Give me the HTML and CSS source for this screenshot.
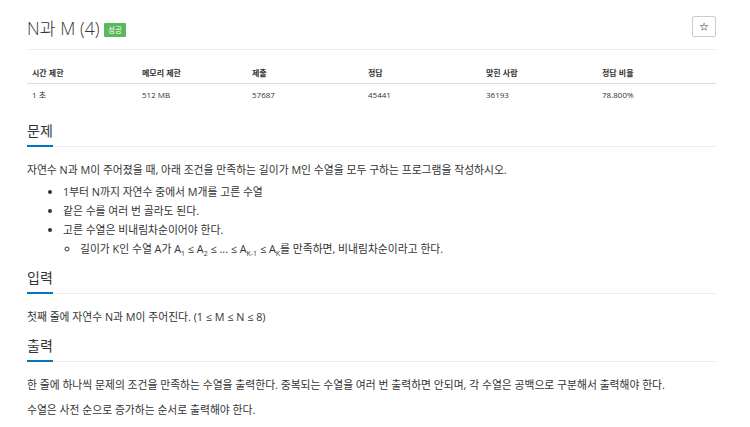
FILE: index.html
```html
<!DOCTYPE html>
<html lang="ko">
<head>
    <meta charset="UTF-8">
    <title>N과 M (4)</title>
    <link rel="stylesheet" href="styles.css">
</head>
<body>
<div class="page">
    <div class="page-header">
        <h1 class="title">N과 M (4) <span class="badge">성공</span></h1>
        <button class="star" type="button">&#9734;</button>
    </div>

    <table class="info">
        <thead>
        <tr>
            <th class="c1">시간 제한</th>
            <th class="c2">메모리 제한</th>
            <th class="c3">제출</th>
            <th class="c4">정답</th>
            <th class="c5">맞힌 사람</th>
            <th>정답 비율</th>
        </tr>
        </thead>
        <tbody>
        <tr>
            <td>1 초</td>
            <td>512 MB</td>
            <td>57687</td>
            <td>45441</td>
            <td>36193</td>
            <td>78.800%</td>
        </tr>
        </tbody>
    </table>

    <section class="problem first">
        <div class="headline"><h2>문제</h2></div>
        <p>자연수 N과 M이 주어졌을 때, 아래 조건을 만족하는 길이가 M인 수열을 모두 구하는 프로그램을 작성하시오.</p>
        <ul>
            <li>1부터 N까지 자연수 중에서 M개를 고른 수열</li>
            <li>같은 수를 여러 번 골라도 된다.</li>
            <li>고른 수열은 비내림차순이어야 한다.
                <ul>
                    <li>길이가 K인 수열 A가 A<sub>1</sub> ≤ A<sub>2</sub> ≤ ... ≤ A<sub>K-1</sub> ≤ A<sub>K</sub>를 만족하면, 비내림차순이라고 한다.</li>
                </ul>
            </li>
        </ul>
    </section>

    <section class="problem">
        <div class="headline"><h2>입력</h2></div>
        <p>첫째 줄에 자연수 N과 M이 주어진다. (1 ≤ M ≤ N ≤ 8)</p>
    </section>

    <section class="problem">
        <div class="headline"><h2>출력</h2></div>
        <p>한 줄에 하나씩 문제의 조건을 만족하는 수열을 출력한다. 중복되는 수열을 여러 번 출력하면 안되며, 각 수열은 공백으로 구분해서 출력해야 한다.</p>
        <p>수열은 사전 순으로 증가하는 순서로 출력해야 한다.</p>
    </section>
</div>
</body>
</html>
```

FILE: styles.css
```css
body {
    font-family: 'Open Sans', 'Noto Sans CJK KR', sans-serif;
    margin: 0;
    padding: 0;
    background-color: #ffffff;
    color: #333333;
    font-size: 10.8px;
}
.page {
    width: 689px;
    margin-left: 27px;
}
.page-header {
    display: flex;
    justify-content: space-between;
    align-items: flex-start;
    padding-top: 14px;
    padding-bottom: 7px;
    border-bottom: 1px solid #eeeeee;
}
.title {
    margin: 0;
    font-size: 17.5px;
    font-weight: 300;
    line-height: 28px;
    color: #333333;
}
.badge {
    display: inline-block;
    vertical-align: 2px;
    background-color: #5cb85c;
    color: #ffffff;
    font-size: 7.5px;
    font-weight: 400;
    line-height: 14px;
    padding: 0 4px;
    border-radius: 1px;
}
.star {
    width: 24px;
    height: 21px;
    margin-top: 2px;
    padding: 0;
    border: 1px solid #cccccc;
    border-radius: 2px;
    background-color: #ffffff;
    color: #333333;
    font-size: 10px;
    line-height: 1;
}
.info {
    width: 100%;
    border-collapse: collapse;
    margin-top: 12px;
}
.info th,
.info td {
    text-align: left;
    padding: 5px 5px;
    font-size: 8px;
    line-height: 11px;
}
.info th {
    font-weight: 700;
    border-bottom: 1px solid #dddddd;
}
.info .c1,
.info .c2 { width: 100px; }
.info .c3 { width: 106px; }
.info .c4 { width: 108px; }
.info .c5 { width: 106px; }
.problem {
    margin-top: 8px;
}
.problem.first {
    margin-top: 14px;
}
.headline {
    border-bottom: 1px solid #eeeeee;
    margin-bottom: 13px;
}
.headline h2 {
    display: inline-block;
    margin: 0 0 -1px;
    font-size: 14px;
    font-weight: 400;
    line-height: 24px;
    padding-bottom: 2px;
    border-bottom: 2px solid #0076c0;
}
.problem p {
    margin: 0 0 6px;
    line-height: 19px;
}
.problem ul {
    margin: -3px 0 0;
    padding-left: 36px;
}
.problem ul ul {
    margin-top: 0;
    padding-left: 17px;
    list-style-type: circle;
}
.problem li {
    line-height: 19px;
}
sub {
    font-size: 7px;
    line-height: 0;
}
```
